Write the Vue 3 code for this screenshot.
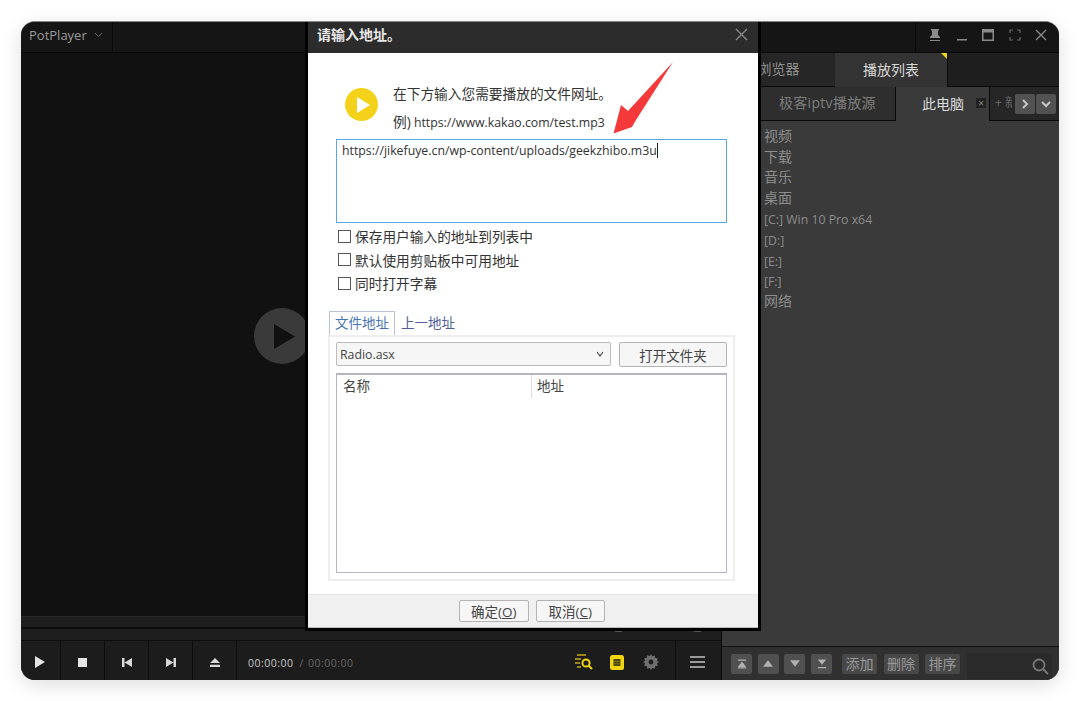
<script setup>
const places = [
  { text: '视频' },
  { text: '下载' },
  { text: '音乐' },
  { text: '桌面' },
  { text: '[C:] Win 10 Pro x64', latin: true },
  { text: '[D:]', latin: true },
  { text: '[E:]', latin: true },
  { text: '[F:]', latin: true },
  { text: '网络' },
]
const options = ['保存用户输入的地址到列表中', '默认使用剪贴板中可用地址', '同时打开字幕']
</script>

<template>
  <div class="page">
    <div class="window">
      <header class="titlebar">
        <div class="brand">PotPlayer
          <svg width="9" height="6" viewBox="0 0 9 6"><path d="M1 1l3.500 3.500L8 1" fill="none" stroke="#6a6a6a" /></svg>
        </div>
        <div class="winctl">
          <svg width="14" height="14" viewBox="0 0 14 14"><path d="M3 1h8v1l-1 1v4l2 2v1H2V9l2-2V3L3 2zM2 12h10v1H2z" fill="#8a8a8a" /></svg>
          <svg width="14" height="14" viewBox="0 0 14 14"><path d="M2 11h10v1.500H2z" fill="#8a8a8a" /></svg>
          <svg width="14" height="14" viewBox="0 0 14 14"><path d="M1 1h12v12H1zM2.500 4.500v7h9v-7z" fill="#8a8a8a" fill-rule="evenodd" /></svg>
          <svg width="14" height="14" viewBox="0 0 14 14"><path d="M2 5V2h3M9 2h3v3M12 9v3H9M5 12H2V9" fill="none" stroke="#666" stroke-width="1.200" /></svg>
          <svg width="14" height="14" viewBox="0 0 14 14"><path d="M2 2l10 10M12 2L2 12" fill="none" stroke="#8a8a8a" stroke-width="1.300" /></svg>
        </div>
      </header>

      <div class="main">
        <section class="player">
          <div class="video">
            <div class="bigplay">
              <svg width="21" height="25" viewBox="0 0 21 25"><path d="M0 0l21 12.500L0 25z" fill="#101010" /></svg>
            </div>
          </div>
          <div class="seek">
            <div class="seekline"></div>
            <span class="mark m1"></span>
            <span class="mark m2"></span>
          </div>
          <div class="controls">
            <button class="ctl playbtn">
              <svg width="10" height="12" viewBox="0 0 10 12"><path d="M0 0l10 6-10 6z" fill="#e4e4e4" /></svg>
            </button>
            <button class="ctl">
              <svg width="9" height="9" viewBox="0 0 9 9"><path d="M0 0h9v9H0z" fill="#e4e4e4" /></svg>
            </button>
            <button class="ctl">
              <svg width="10" height="9" viewBox="0 0 10 9"><path d="M0 0h2.500v9H0zM2.500 4.500L10 0v9z" fill="#d8d8d8" /></svg>
            </button>
            <button class="ctl">
              <svg width="10" height="9" viewBox="0 0 10 9"><path d="M7.500 0H10v9H7.500zM7.500 4.500L0 0v9z" fill="#d8d8d8" /></svg>
            </button>
            <button class="ctl">
              <svg width="10" height="9" viewBox="0 0 10 9"><path d="M5 0l5 5H0zM0 6.800h10V9H0z" fill="#d8d8d8" /></svg>
            </button>
            <div class="time"><b>00:00:00</b><i>/</i><span>00:00:00</span></div>
            <div class="tools">
              <svg width="20" height="16" viewBox="0 0 20 16">
                <path d="M3 1h9M1 5h6M1 9h5M3 13h4" stroke="#c9a90f" stroke-width="1.300" fill="none" />
                <circle cx="12" cy="9" r="3.600" stroke="#efd20f" stroke-width="2" fill="none" />
                <path d="M14.500 11.500L18 15" stroke="#efd20f" stroke-width="2" />
              </svg>
              <svg width="14" height="15" viewBox="0 0 14 15">
                <rect width="14" height="15" rx="2.500" fill="#f1d610" />
                <rect x="3.500" y="4" width="7" height="7" fill="#4a4412" />
                <path d="M3.500 6.500h7M3.500 8.800h7" stroke="#8f8516" stroke-width=".8" />
              </svg>
              <svg class="gear" width="16" height="16" viewBox="0 0 16 16">
                <path d="M8 0l1.300 2.300 2.500-.8.400 2.600 2.600.4-.8 2.500L16 8l-2 1.300.8 2.500-2.600.4-.4 2.600-2.500-.8L8 16l-1.300-2-2.500.8-.4-2.600-2.600-.4.8-2.500L0 8l2-1.300-.8-2.500 2.600-.4.4-2.600 2.500.8z" fill="#6e6e6e" />
                <circle cx="8" cy="8" r="2.400" fill="#1c1c1c" />
              </svg>
            </div>
            <button class="menu">
              <svg width="15" height="12" viewBox="0 0 15 12"><path d="M0 1h15M0 6h15M0 11h15" stroke="#c4c4c4" stroke-width="1.400" /></svg>
            </button>
          </div>
        </section>

        <aside class="side">
          <div class="sidetabs">
            <div class="stab">浏览器</div>
            <div class="stab active">播放列表<span class="corner"></span></div>
            <div class="sfill"></div>
          </div>
          <div class="subtabs">
            <div class="sub first">极客iptv播放源</div>
            <div class="sub on">此电脑<span class="xbox">×</span></div>
            <div class="sub add"><span class="addtext">+ 新</span></div>
            <div class="navbtns">
              <span class="nav">
                <svg width="8" height="10" viewBox="0 0 8 10"><path d="M2 1l4 4-4 4" fill="none" stroke="#c8c8c8" stroke-width="2" /></svg>
              </span>
              <span class="nav">
                <svg width="10" height="8" viewBox="0 0 10 8"><path d="M1 2l4 4 4-4" fill="none" stroke="#c8c8c8" stroke-width="2" /></svg>
              </span>
            </div>
          </div>
          <ul class="places">
            <li v-for="p in places" :key="p.text" :class="{ latin: p.latin }">{{ p.text }}</li>
          </ul>
          <div class="sidefoot">
            <span class="sq"><svg width="10" height="10" viewBox="0 0 12 11"><path d="M1 0h10v1.500H1zM6 2.500L11 9H1zM1 9.500h10V11H1z" fill="#b0b0b0" /></svg></span>
            <span class="sq"><svg width="10" height="7" viewBox="0 0 12 8"><path d="M6 0l6 8H0z" fill="#b0b0b0" /></svg></span>
            <span class="sq"><svg width="10" height="7" viewBox="0 0 12 8"><path d="M0 0h12L6 8z" fill="#b0b0b0" /></svg></span>
            <span class="sq"><svg width="10" height="10" viewBox="0 0 12 11"><path d="M1 0h10L6 6.500zM1 9h10v1.500H1z" fill="#b0b0b0" /></svg></span>
            <span class="word first">添加</span>
            <span class="word">删除</span>
            <span class="word">排序</span>
            <div class="search">
              <svg width="17" height="17" viewBox="0 0 17 17"><circle cx="7" cy="7" r="5.500" fill="none" stroke="#777" stroke-width="1.800" /><path d="M11 11l5 5" stroke="#777" stroke-width="2" /></svg>
            </div>
          </div>
        </aside>
      </div>

      <div class="dialog">
        <div class="dlghead">
          <span>请输入地址。</span>
          <svg width="13" height="13" viewBox="0 0 13 13"><path d="M1 1l11 11M12 1L1 12" stroke="#8b8b8b" stroke-width="1.400" /></svg>
        </div>
        <div class="dlgbody">
          <div class="intro">
            <div class="yellow">
              <svg width="14" height="16" viewBox="0 0 14 16"><path d="M1 0l13 8-13 8z" fill="#fff" /></svg>
            </div>
            <div class="introtext">
              <p>在下方输入您需要播放的文件网址。</p>
              <p class="eg"><span class="egcn">例)</span> https://www.kakao.com/test.mp3</p>
            </div>
          </div>
          <div class="urlbox">https://jikefuye.cn/wp-content/uploads/geekzhibo.m3u<span class="caret"></span></div>
          <div class="opts">
            <label v-for="o in options" :key="o" class="opt"><span class="check"></span>{{ o }}</label>
          </div>
          <div class="tabs">
            <span class="tab on">文件地址</span>
            <span class="tab">上一地址</span>
          </div>
          <div class="panel">
            <div class="row">
              <div class="combo">Radio.asx<svg width="8" height="6" viewBox="0 0 8 6"><path d="M1 1l3 4 3-4" fill="none" stroke="#444" stroke-width="1.100" /></svg></div>
              <button class="btn open">打开文件夹</button>
            </div>
            <div class="list">
              <div class="listhead">
                <span class="c1">名称</span>
                <span class="c2">地址</span>
              </div>
            </div>
          </div>
        </div>
        <div class="dlgfoot">
          <button class="btn foot">确定(<u>O</u>)</button>
          <button class="btn foot">取消(<u>C</u>)</button>
        </div>
        <svg class="arrow" width="64" height="76" viewBox="0 0 64 76">
          <path d="M60 1L23 59 19 66 .5 72.500 8 44 15 50z" fill="#f5393a" />
        </svg>
      </div>
    </div>
  </div>
</template>

<style scoped>
.page {
  box-sizing: border-box;
  width: 1080px;
  height: 701px;
  padding: 21px;
  background: #fff;
  overflow: hidden;
  font-family: "Open Sans", "Noto Sans CJK SC", sans-serif;
}
.window {
  position: relative;
  width: 1038px;
  height: 659px;
  display: flex;
  flex-direction: column;
  border-radius: 14px;
  overflow: hidden;
  background: #141414;
  border-top: 1px solid #888;
  box-sizing: border-box;
  box-shadow: 0 5px 20px rgba(0, 0, 0, .13);
}
.titlebar {
  height: 30px;
  display: flex;
  justify-content: space-between;
  background: #151515;
  border-bottom: 1px solid #0a0a0a;
  flex-shrink: 0;
}
.brand {
  width: 92px;
  box-sizing: border-box;
  padding: 0 0 5px 8px;
  display: flex;
  align-items: center;
  gap: 7px;
  color: #9a9a9a;
  font-size: 13px;
  border-right: 1px solid #0a0a0a;
}
.winctl {
  width: 144px;
  box-sizing: border-box;
  padding: 0 11px 5px 12px;
  display: flex;
  align-items: center;
  justify-content: space-between;
  border-left: 1px solid #0a0a0a;
}
.main {
  flex: 1;
  display: flex;
  min-height: 0;
}
.player {
  width: 701px;
  display: flex;
  flex-direction: column;
  border-right: 1px solid #0a0a0a;
  box-sizing: border-box;
}
.video {
  flex: 1;
  background: #111;
  display: flex;
  align-items: center;
  padding: 3px 0 0 233px;
}
.bigplay {
  width: 56px;
  height: 56px;
  border-radius: 50%;
  background: #3a3a3a;
  display: flex;
  align-items: center;
  justify-content: center;
  padding-left: 4px;
  box-sizing: border-box;
}
.seek {
  position: relative;
  height: 24px;
  background: #1e1e1e;
  border-top: 1px solid #282828;
  box-sizing: border-box;
  padding-top: 10px;
}
.seekline {
  height: 2px;
  background: #0c0c0c;
}
.mark {
  position: absolute;
  top: 13px;
  width: 7px;
  height: 2px;
  background: #555;
}
.m1 {
  left: 594px;
}
.m2 {
  left: 673px;
}
.controls {
  height: 40px;
  display: flex;
  align-items: center;
  background: #1c1c1c;
  border-top: 1px solid #0c0c0c;
  box-sizing: border-box;
  flex-shrink: 0;
}
.ctl {
  width: 44px;
  height: 100%;
  padding: 3px 0 0;
  border: 0;
  border-right: 1px solid #0c0c0c;
  background: transparent;
  display: flex;
  align-items: center;
  justify-content: center;
}
.playbtn {
  width: 40px;
  padding-right: 2px;
}
.time {
  margin: 4px 0 0 11px;
  font-size: 10.500px;
  display: flex;
  gap: 6px;
  letter-spacing: .5px;
}
.time b {
  color: #c8c8c8;
  font-weight: 400;
}
.time i {
  color: #666;
  font-style: normal;
  margin-right: -2px;
}
.time span {
  color: #666;
}
.tools {
  margin: 3px 0 0 auto;
  display: flex;
  align-items: center;
  gap: 16px;
  padding-right: 16px;
}
.gear {
  margin-left: 3px;
}
.menu {
  width: 46px;
  height: 100%;
  padding: 3px 2px 0 0;
  border: 0;
  border-left: 1px solid #0c0c0c;
  background: transparent;
  display: flex;
  align-items: center;
  justify-content: center;
}
.side {
  width: 337px;
  display: flex;
  flex-direction: column;
  background: #3a3a3a;
}
.sidetabs {
  height: 34px;
  display: flex;
  background: #1e1e1e;
  flex-shrink: 0;
}
.stab {
  width: 113px;
  display: flex;
  align-items: center;
  justify-content: center;
  padding-bottom: 3px;
  font-size: 14px;
  color: #8f8f8f;
  background: #262626;
  border-bottom: 1px solid #0a0a0a;
  box-sizing: border-box;
  position: relative;
}
.stab.active {
  background: #333;
  color: #d8d8d8;
  border-bottom: 0;
  border-right: 1px solid #0a0a0a;
}
.sfill {
  flex: 1;
  border-bottom: 1px solid #0a0a0a;
}
.corner {
  position: absolute;
  right: 0;
  top: 0;
  width: 0;
  height: 0;
  border-top: 6px solid #f2d714;
  border-left: 6px solid transparent;
}
.subtabs {
  height: 34px;
  display: flex;
  align-items: stretch;
  background: #2b2b2b;
  flex-shrink: 0;
  position: relative;
}
.sub {
  display: flex;
  align-items: center;
  padding-bottom: 3px;
  box-sizing: border-box;
  font-size: 14px;
  color: #7e7e7e;
}
.sub.first {
  width: 174px;
  padding-left: 57px;
  letter-spacing: .3px;
  background: #2e2e2e;
  border-bottom: 1px solid #0a0a0a;
  border-right: 1px solid #0a0a0a;
}
.sub.on {
  width: 94px;
  padding-left: 26px;
  background: #3a3a3a;
  color: #dcdcdc;
  border-right: 1px solid #0a0a0a;
  gap: 12px;
}
.xbox {
  width: 10px;
  height: 10px;
  background: #222;
  color: #888;
  font-size: 10px;
  line-height: 10px;
  text-align: center;
}
.sub.add {
  padding-left: 5px;
  font-size: 12px;
  flex: 1;
  background: #262626;
  border-bottom: 1px solid #0a0a0a;
}
.addtext {
  width: 17px;
  overflow: hidden;
  white-space: nowrap;
  color: #666;
}
.navbtns {
  position: absolute;
  right: 3px;
  top: 7px;
  display: flex;
  gap: 1px;
}
.nav {
  width: 20px;
  height: 20px;
  border-radius: 2px;
  background: #525252;
  display: flex;
  align-items: center;
  justify-content: center;
}
.places {
  flex: 1;
  list-style: none;
  margin: 0;
  padding: 5px 0 0 42px;
  font-size: 14px;
  line-height: 20.600px;
  color: #8d8d8d;
}
.places li {
  height: 20.600px;
}
.places li.latin {
  font-size: 12.300px;
  line-height: 24.600px;
}
.sidefoot {
  height: 34px;
  display: flex;
  align-items: center;
  padding-left: 9px;
  background: #303030;
  border-top: 1px solid #111;
  box-sizing: border-box;
  flex-shrink: 0;
}
.sq {
  width: 21px;
  height: 20px;
  margin-right: 5.700px;
  border-radius: 2px;
  background: #505050;
  display: flex;
  align-items: center;
  justify-content: center;
}
.word {
  height: 20px;
  width: 35px;
  margin-right: 6.500px;
  border-radius: 2px;
  background: #484848;
  color: #9a9a9a;
  font-size: 14px;
  line-height: 20px;
  text-align: center;
}
.word.first {
  margin-left: 4.300px;
}
.search {
  width: 85px;
  height: 26px;
  margin-top: 5px;
  border-radius: 3px;
  background: #2a2a2a;
  display: flex;
  align-items: center;
  justify-content: flex-end;
  padding-right: 3px;
  box-sizing: border-box;
}
.dialog {
  position: absolute;
  left: 284px;
  top: -1px;
  width: 450px;
  height: 607px;
  display: flex;
  flex-direction: column;
  border-right: 3px solid #000;
  border-bottom: 3px solid #000;
  border-left: 3px solid #000;
  box-sizing: content-box;
}
.dlghead {
  height: 32px;
  box-sizing: border-box;
  background: #2c2c2c;
  color: #e8e8e8;
  display: flex;
  align-items: center;
  justify-content: space-between;
  padding: 0 10px 6px 9px;
  font-size: 14px;
  font-weight: 700;
  flex-shrink: 0;
}
.dlgbody {
  flex: 1;
  background: #fff;
  padding: 0 23px 0 20px;
  display: flex;
  flex-direction: column;
  color: #333;
  min-height: 0;
}
.intro {
  display: flex;
  align-items: center;
  gap: 15px;
  height: 86px;
  padding-left: 17px;
  padding-top: 17px;
  box-sizing: border-box;
  flex-shrink: 0;
}
.yellow {
  width: 33px;
  height: 33px;
  border-radius: 50%;
  background: #f4d21a;
  display: flex;
  align-items: center;
  justify-content: center;
  padding-left: 3px;
  box-sizing: border-box;
}
.introtext {
  padding-top: 7px;
}
.introtext p {
  margin: 0;
  font-size: 13.700px;
  line-height: 20px;
}
.introtext .eg {
  margin-top: 8px;
  font-size: 12.300px;
}
.egcn {
  font-size: 13.700px;
}
.urlbox {
  box-sizing: border-box;
  margin-left: 8px;
  width: 391px;
  height: 84px;
  flex-shrink: 0;
  border: 1px solid #5aa7e6;
  padding: 1px 5px;
  font-size: 12.300px;
  line-height: 20px;
  white-space: nowrap;
}
.caret {
  display: inline-block;
  width: 1px;
  height: 15px;
  background: #222;
  vertical-align: -3px;
}
.opts {
  display: flex;
  flex-direction: column;
  margin: 3px 0 0 10px;
  gap: 3.500px;
}
.opt {
  display: flex;
  align-items: center;
  gap: 4px;
  height: 20px;
  font-size: 13.700px;
}
.check {
  width: 11px;
  height: 11px;
  border: 1px solid #555;
  background: #fff;
}
.tabs {
  display: flex;
  margin: 18px 0 0 1px;
  font-size: 13.500px;
  height: 24px;
  flex-shrink: 0;
}
.tab {
  padding: 0 5px;
  line-height: 24px;
  color: #4f5d9e;
  box-sizing: border-box;
}
.tab.on {
  background: #fff;
  border: 1px solid #b9c2d6;
  border-bottom: 0;
  color: #4874b8;
  line-height: 22px;
  margin-right: 1px;
}
.panel {
  box-sizing: border-box;
  height: 246px;
  border: 2px solid #eee;
  padding: 5px 6px;
  flex-shrink: 0;
}
.row {
  display: flex;
  gap: 8px;
  height: 24px;
}
.combo {
  box-sizing: border-box;
  width: 275px;
  height: 24px;
  border: 1px solid #bcbcbc;
  border-radius: 2px;
  background: #f6f6f6;
  padding: 0 3px;
  display: flex;
  align-items: center;
  justify-content: space-between;
  font-size: 12.300px;
  color: #444;
}
.combo svg {
  margin-right: 3px;
}
.btn {
  box-sizing: border-box;
  border: 1px solid #b4b4b4;
  border-radius: 2px;
  background: #f6f6f6;
  color: #444;
  font-family: inherit;
  font-size: 13.500px;
  padding: 0;
}
.open {
  width: 108px;
  height: 25px;
}
.list {
  box-sizing: border-box;
  margin-top: 7px;
  width: 391px;
  height: 200px;
  border: 1px solid #b4b4c2;
  border-top-width: 2px;
  background: #fff;
}
.listhead {
  display: flex;
  height: 23px;
  font-size: 13.500px;
  line-height: 23px;
  color: #444;
}
.c1 {
  width: 195px;
  padding-left: 6px;
  box-sizing: border-box;
  border-right: 1px solid #ddd;
}
.c2 {
  padding-left: 5px;
}
.dlgfoot {
  height: 34px;
  flex-shrink: 0;
  box-sizing: border-box;
  background: #f0f0f0;
  border-top: 1px solid #e6e6e6;
  border-bottom: 1px solid #bbb;
  padding: 0 2px 1px 0;
  display: flex;
  align-items: center;
  justify-content: center;
  gap: 7px;
}
.foot {
  width: 69.500px;
  height: 22px;
}
.arrow {
  position: absolute;
  left: 305px;
  top: 40px;
}
</style>

<style>
body {
  margin: 0;
}
</style>
